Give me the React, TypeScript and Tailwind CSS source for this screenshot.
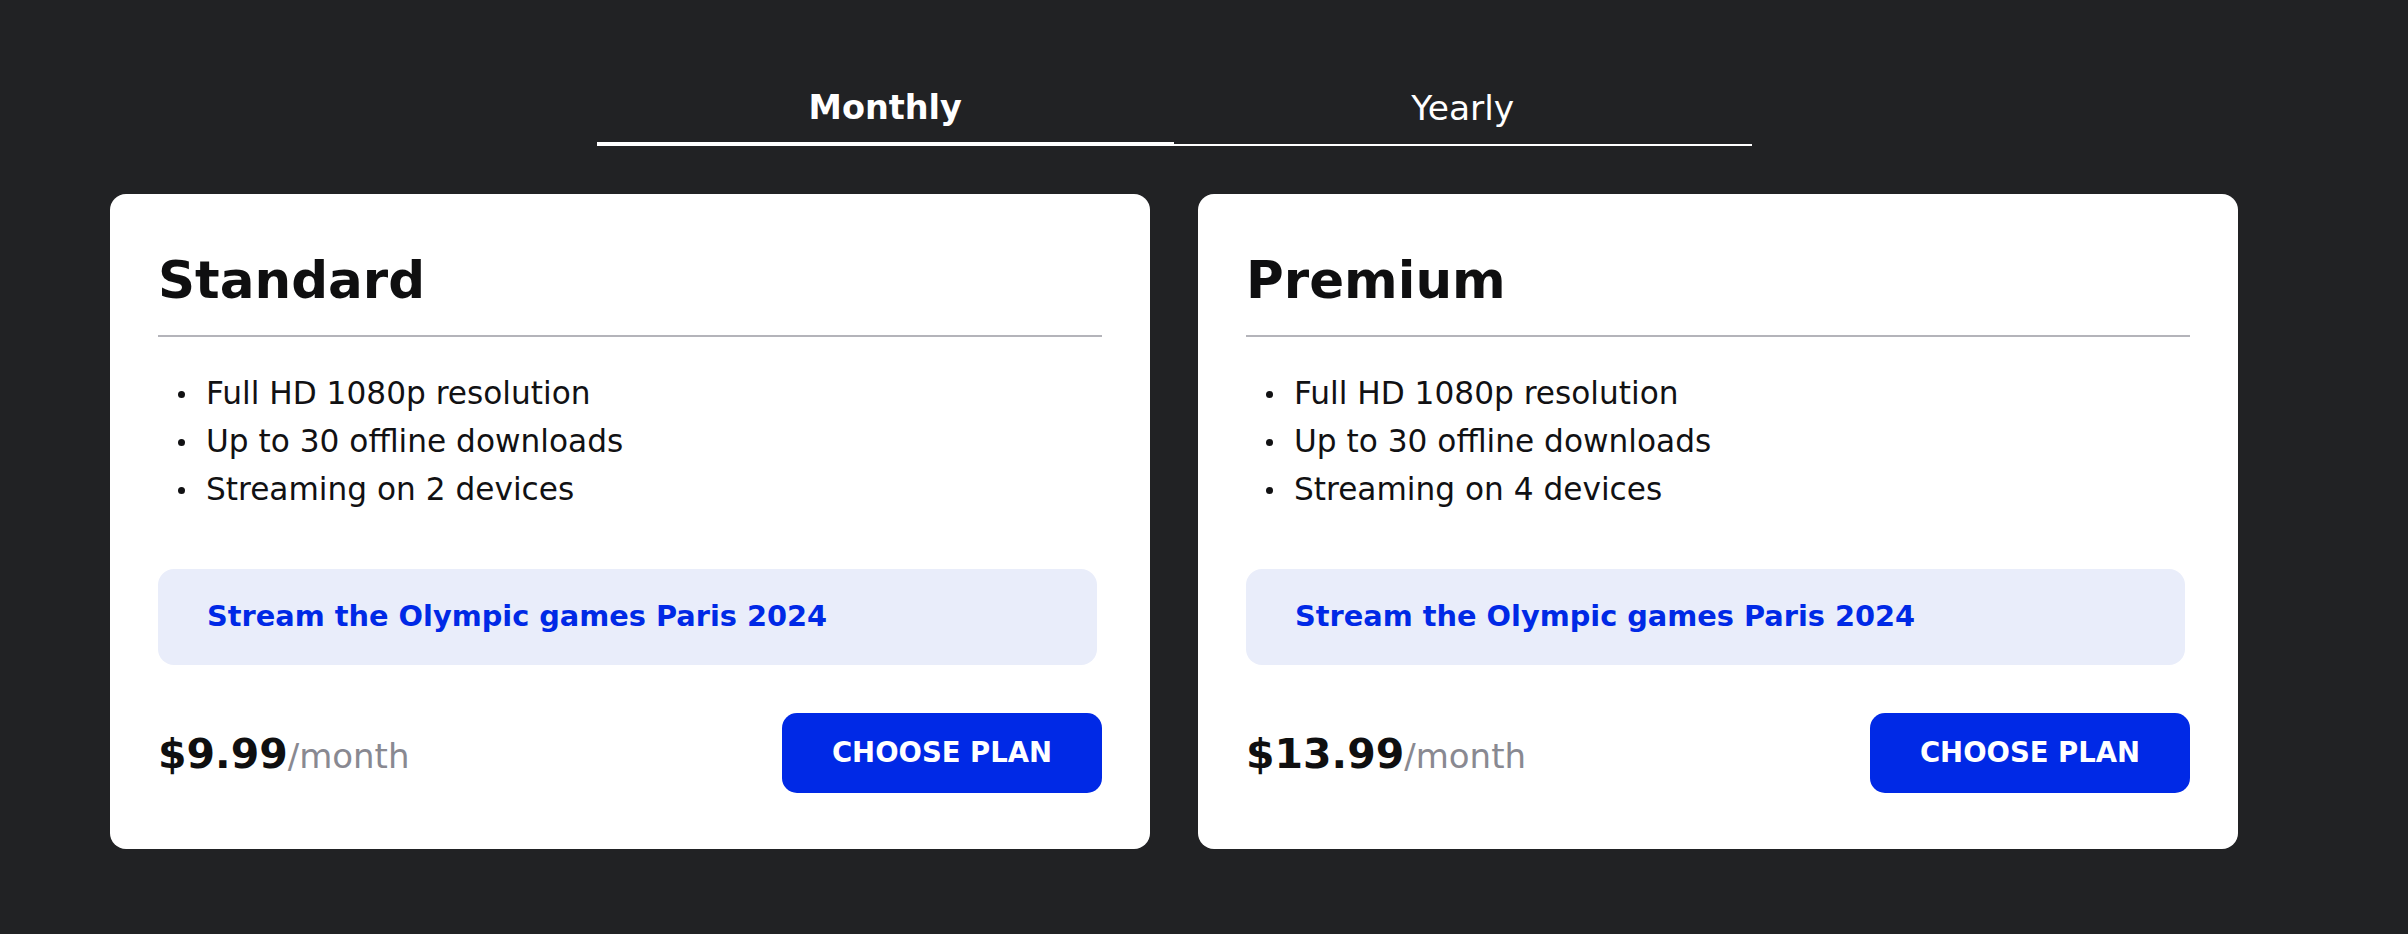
import React from "react";

type Plan = {
  name: string;
  features: string[];
  price: string;
};

const plans: Plan[] = [
  {
    name: "Standard",
    features: ["Full HD 1080p resolution", "Up to 30 offline downloads", "Streaming on 2 devices"],
    price: "$9.99",
  },
  {
    name: "Premium",
    features: ["Full HD 1080p resolution", "Up to 30 offline downloads", "Streaming on 4 devices"],
    price: "$13.99",
  },
];

function PlanCard({ plan }: { plan: Plan }) {
  return (
    <div className="flex flex-col rounded-[16px] bg-white pl-[48px] pr-[48px] pt-[61px] pb-[56px]">
      <div className="border-b-2 border-[#b4b4ba] pb-[28px]">
        <h2 className="text-[51.5px] font-bold leading-none text-[#0f0f10]">{plan.name}</h2>
      </div>
      <ul className="mt-[32px] flex flex-col">
        {plan.features.map((f) => (
          <li key={f} className="flex h-[48px] items-center pl-[20px] text-[31.2px] leading-[48px] text-[#111113]">
            <span className="mt-[3px] h-[7px] w-[7px] shrink-0 rounded-full bg-[#111113]" />
            <span className="ml-[21px]">{f}</span>
          </li>
        ))}
      </ul>
      <div className="mt-[56px] mr-[5px] flex h-[96px] items-center rounded-[16px] bg-[#e9edfa] pl-[49px]">
        <span className="text-[28.8px] font-bold text-[#0029e6]">Stream the Olympic games Paris 2024</span>
      </div>
      <div className="mt-[48px] flex h-[80px] items-center justify-between">
        <div className="flex items-baseline pt-[4px]">
          <span className="text-[41px] font-bold leading-none text-[#0f0f10]">{plan.price}</span>
          <span className="text-[34px] leading-none text-[#898991]">/month</span>
        </div>
        <button className="flex h-[80px] w-[320px] items-center justify-center rounded-[15px] bg-[#0029e6] text-[27.5px] font-bold text-white">
          CHOOSE PLAN
        </button>
      </div>
    </div>
  );
}

export default function App() {
  return (
    <div className="h-[934px] w-full overflow-hidden bg-[#212224] font-['DejaVu_Sans',sans-serif]">
      <div className="ml-[110px] w-[2128px] pt-[81px]">
        <div className="mx-auto flex w-[1155px] items-end">
          <button className="flex flex-1 justify-center border-b-4 border-white pb-[7px] text-[33.5px] font-bold leading-[54px] text-white">
            Monthly
          </button>
          <button className="flex flex-1 justify-center border-b-2 border-white pb-[9px] text-[34.5px] leading-[54px] text-white">
            Yearly
          </button>
        </div>
        <div className="mt-[48px] grid grid-cols-2 gap-[48px]">
          {plans.map((p) => (
            <PlanCard key={p.name} plan={p} />
          ))}
        </div>
      </div>
    </div>
  );
}
